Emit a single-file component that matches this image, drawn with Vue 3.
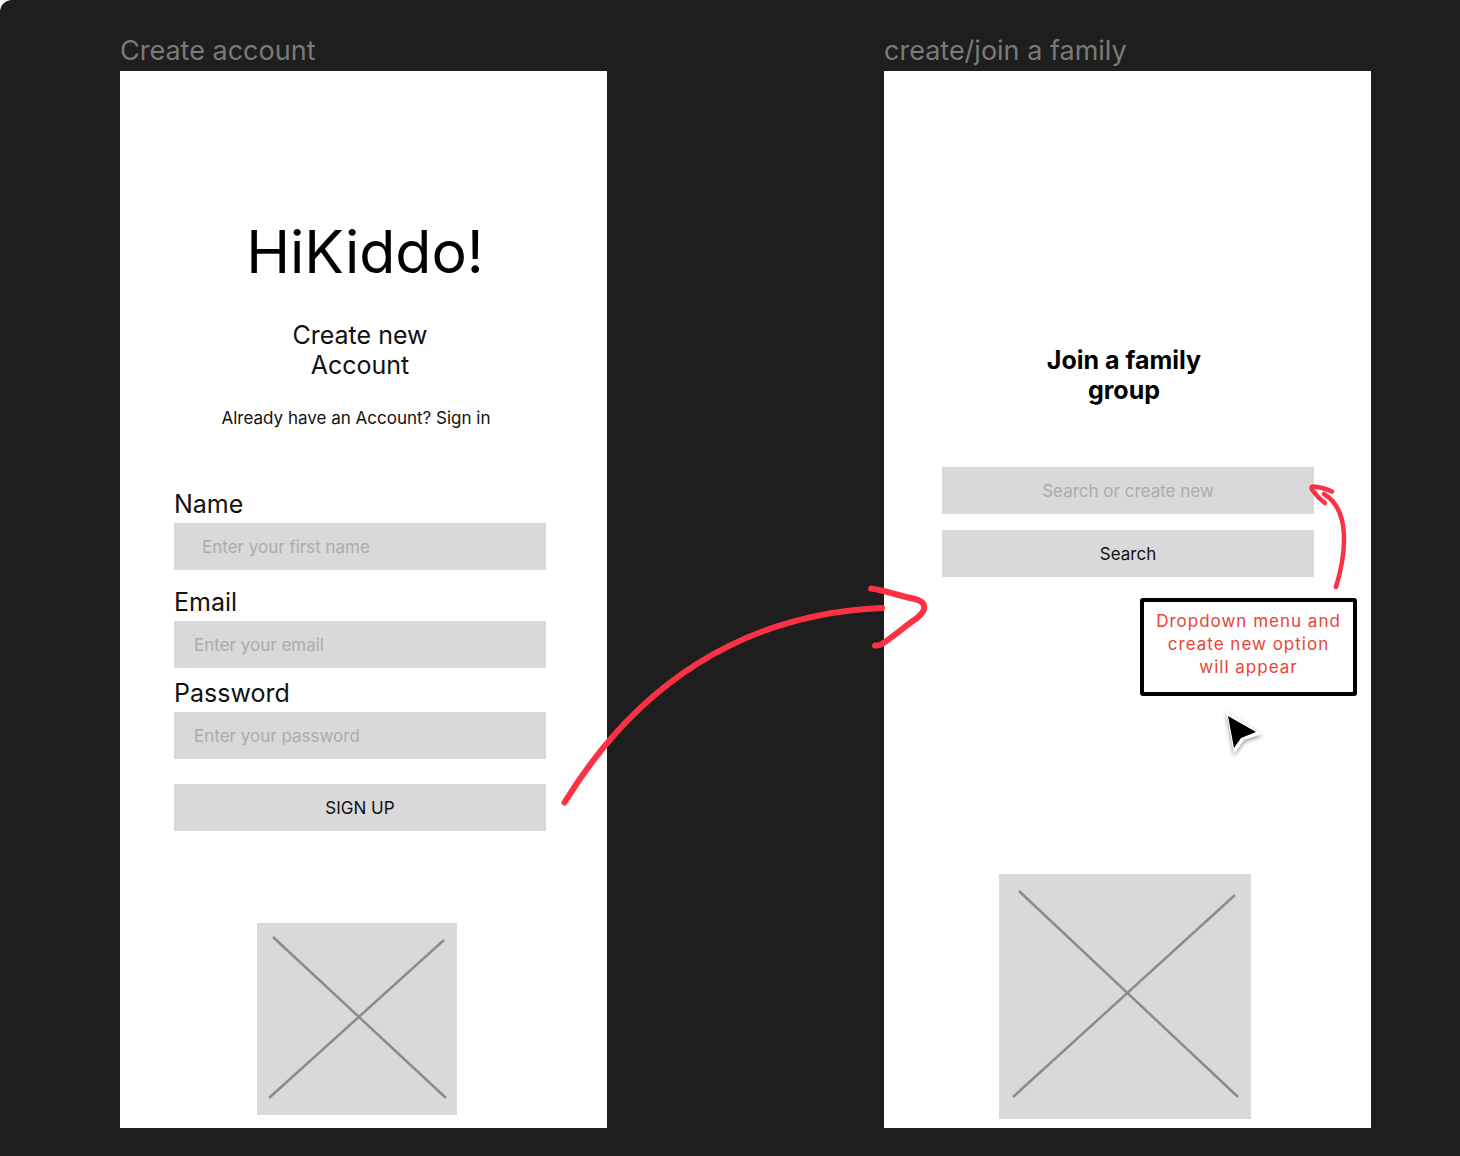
<script setup>
import { ref } from 'vue'

const fields = ref([
  { id: 'name', label: 'Name', type: 'text', placeholder: 'Enter your first name', value: '' },
  { id: 'email', label: 'Email', type: 'email', placeholder: 'Enter your email', value: '' },
  { id: 'password', label: 'Password', type: 'password', placeholder: 'Enter your password', value: '' },
])
const family = ref('')
</script>

<template>
  <main class="canvas">
    <section class="board">
      <h2 class="board-name">Create account</h2>
      <div class="frame signup">
        <h1 class="brand">HiKiddo!</h1>
        <p class="subtitle">Create new<br />Account</p>
        <p class="hint">Already have an Account? <a href="#">Sign in</a></p>
        <form class="form" @submit.prevent>
          <div v-for="f in fields" :key="f.id" class="field" :class="f.id">
            <label :for="f.id">{{ f.label }}</label>
            <input :id="f.id" v-model="f.value" class="box" :type="f.type" :placeholder="f.placeholder" />
          </div>
          <button class="box submit" type="submit">SIGN UP</button>
        </form>
        <svg class="picture" viewBox="0 0 200 192" width="200" height="192" aria-hidden="true">
          <rect width="200" height="192" fill="#d9d9d9" />
          <path d="M16 14 189 175M187 17 12 175" />
        </svg>
      </div>
    </section>

    <section class="board">
      <h2 class="board-name">create/join a family</h2>
      <div class="frame join">
        <h3 class="join-title">Join a family<br />group</h3>
        <form class="join-form" @submit.prevent>
          <input v-model="family" class="box search" type="text" aria-label="Family group" placeholder="Search or create new" />
          <button class="box" type="submit">Search</button>
        </form>
        <svg class="picture" viewBox="0 0 252 245" width="252" height="245" aria-hidden="true">
          <rect width="252" height="245" fill="#d9d9d9" />
          <path d="M20 17 239 223M236 21 14 223" />
        </svg>

        <svg class="flow-arrow" viewBox="0 0 380 230" width="380" height="230" aria-hidden="true">
          <path d="M10.500 222.500C82 106 187 34 328 28" />
          <path d="M317 8.500C330 10 345 16 361 19C373 22 373 30 363 38C350 47 340 56 328 64Q325 66 321 65.500" />
        </svg>
        <svg class="note-arrow" viewBox="0 0 50 115" width="50" height="115" aria-hidden="true">
          <path d="M31 107C41 74 46 30 19 14" />
          <path d="M27 11.500Q17 7 8 6.500Q5 7 8 11Q13 18 20 23" />
        </svg>
        <p class="note">Dropdown menu and<br />create new option<br />will appear</p>
        <svg class="cursor" viewBox="0 0 50 56" width="50" height="56" aria-hidden="true">
          <path d="M10 9 18 52 28 38 46 32Z" fill="#fff" />
          <path d="M12 14 18 46 25 36 40 30Z" fill="#000" />
        </svg>
      </div>
    </section>
  </main>
</template>

<style>
body {
  margin: 0;
  background: #fff;
}
</style>

<style scoped>
.canvas {
  box-sizing: border-box;
  display: flex;
  gap: 277px;
  min-height: 100vh;
  padding: 34px 89px 28px 120px;
  overflow: hidden;
  background: #1e1e1e;
  border-top-left-radius: 12px;
  color: #111;
  font-family: Inter, "Liberation Sans", sans-serif;
}

h1, h2, h3, p {
  margin: 0;
  font-weight: 400;
}

.board {
  display: flex;
  flex: 1;
  flex-direction: column;
  min-width: 0;
}

.board-name {
  height: 37px;
  color: #7a7a7a;
  font-size: 27px;
  line-height: 34px;
  white-space: nowrap;
}

.frame {
  position: relative;
  display: flex;
  flex: 1;
  flex-direction: column;
  background: #fff;
}

.signup {
  padding: 145px 61px 13px 54px;
}

.signup::before {
  position: absolute;
  top: 14px;
  left: 14px;
  width: 40px;
  height: 34px;
  background: #fdfdfd;
  content: "";
}

.brand {
  padding-left: 10px;
  color: #000;
  font-size: 59px;
  line-height: 72px;
  text-align: center;
}

.subtitle {
  margin-top: 32px;
  font-size: 25px;
  line-height: 30px;
  text-align: center;
}

.hint {
  margin-top: 28px;
  padding-right: 8px;
  font-size: 17px;
  line-height: 20px;
  text-align: center;
}

.hint a {
  color: inherit;
  text-decoration: none;
}

.form {
  display: flex;
  flex-direction: column;
  margin-top: 61px;
}

.field {
  display: flex;
  flex-direction: column;
  gap: 4px;
}

.field label {
  font-size: 25px;
  line-height: 30px;
}

.email {
  margin: 17px 0 10px;
}

.box {
  box-sizing: border-box;
  width: 100%;
  height: 47px;
  margin: 0;
  padding: 0 20px;
  background: #d9d9d9;
  border: 0;
  border-radius: 0;
  color: #111;
  font-family: inherit;
  font-size: 17px;
  line-height: 20px;
}

.box::placeholder {
  color: #adabab;
  opacity: 1;
}

.name .box {
  padding-left: 28px;
}

.submit {
  margin-top: 25px;
}

.picture {
  display: block;
  align-self: center;
  flex: none;
  margin-top: auto;
  margin-right: 6px;
}

.picture path {
  fill: none;
  stroke: #8b8b8b;
  stroke-width: 2.5;
}

.join {
  padding: 274px 57px 9px 58px;
}

.join-title {
  padding-right: 8px;
  color: #000;
  font-size: 25px;
  font-weight: 700;
  line-height: 30px;
  text-align: center;
}

.join-form {
  display: flex;
  flex-direction: column;
  gap: 16px;
  margin-top: 62px;
}

.search {
  text-align: center;
}

.flow-arrow,
.note-arrow,
.note,
.cursor {
  position: absolute;
}

.flow-arrow path,
.note-arrow path {
  fill: none;
  stroke: #fc3144;
  stroke-linecap: round;
  stroke-linejoin: round;
  stroke-width: 6;
}

.note-arrow path {
  stroke-width: 4.5;
}

.flow-arrow {
  top: 509px;
  left: -330px;
}

.note-arrow {
  top: 409px;
  right: 16px;
}

.note {
  top: 527px;
  right: 14px;
  box-sizing: border-box;
  width: 217px;
  height: 98px;
  padding-top: 8px;
  background: #fff;
  border: 4px solid #000;
  border-radius: 3px;
  color: #ea4335;
  font-size: 17px;
  letter-spacing: 1px;
  line-height: 23px;
  text-align: center;
  white-space: nowrap;
}

.cursor {
  top: 631px;
  right: 105px;
  filter: drop-shadow(0 2px 2px rgba(0, 0, 0, 0.4));
}
</style>
